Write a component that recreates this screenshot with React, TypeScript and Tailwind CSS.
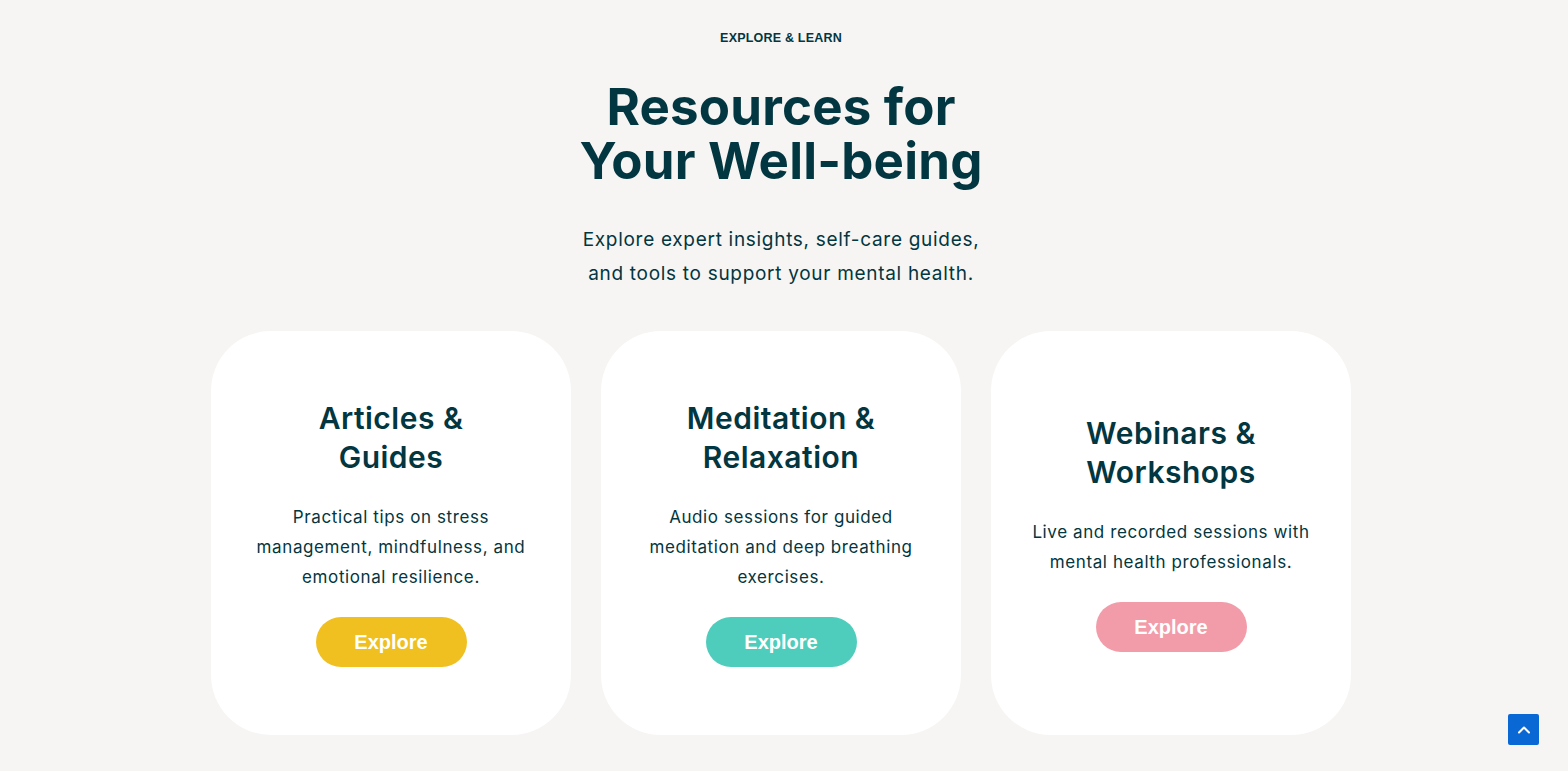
import { ChevronUp } from 'lucide-react'

type Resource = {
  title: string[]
  body: string[]
  button: string
}

const resources: Resource[] = [
  {
    title: ['Articles &', 'Guides'],
    body: ['Practical tips on stress', 'management, mindfulness, and', 'emotional resilience.'],
    button: 'bg-[#f0c020]',
  },
  {
    title: ['Meditation &', 'Relaxation'],
    body: ['Audio sessions for guided', 'meditation and deep breathing', 'exercises.'],
    button: 'bg-[#4fcdbc]',
  },
  {
    title: ['Webinars &', 'Workshops'],
    body: ['Live and recorded sessions with', 'mental health professionals.'],
    button: 'bg-[#f29ca9]',
  },
]

export default function App() {
  return (
    <div className="min-h-screen bg-[#f7f5f3] text-[#023640] font-['Inter',sans-serif]">
      <section className="flex flex-col items-center pt-[29px] pb-9 pr-[6px]">
        <p className="text-[12.5px] font-bold tracking-[0.2px] font-['Liberation_Sans',sans-serif]">
          EXPLORE &amp; LEARN
        </p>

        <h1 className="mt-[32px] text-center text-[51px] leading-[54px] font-bold tracking-[0.2px]">
          Resources for
          <br />
          Your Well-being
        </h1>

        <p className="mt-[35px] text-center text-[19px] leading-[34px] tracking-[0.7px]">
          Explore expert insights, self-care guides,
          <br />
          and tools to support your mental health.
        </p>

        <div className="mt-[40px] grid grid-cols-3 gap-[30px]">
          {resources.map((r) => (
            <div
              key={r.title[0]}
              className="w-[360px] h-[404px] rounded-[60px] bg-white flex flex-col items-center justify-center text-center px-6"
            >
              <h2 className="text-[30px] leading-[39px] font-semibold tracking-[0.5px]">
                {r.title.map((line) => (
                  <span key={line} className="block">
                    {line}
                  </span>
                ))}
              </h2>
              <p className="mt-[25px] text-[17px] leading-[30px] tracking-[0.6px]">
                {r.body.map((line) => (
                  <span key={line} className="block">
                    {line}
                  </span>
                ))}
              </p>
              <button
                className={`mt-[25px] w-[151px] h-[50px] rounded-full text-white text-[20px] font-bold font-['Liberation_Sans',sans-serif] ${r.button}`}
              >
                Explore
              </button>
            </div>
          ))}
        </div>
      </section>

      <button className="fixed right-[29px] bottom-[26px] w-[31px] h-[31px] rounded-[2px] bg-[#0a68d4] flex items-center justify-center text-white">
        <ChevronUp size={20} strokeWidth={2.5} />
      </button>
    </div>
  )
}
